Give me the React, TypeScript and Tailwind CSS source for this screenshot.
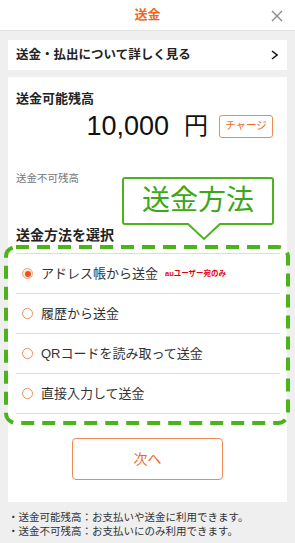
import React from 'react';

const items = [
    { label: 'アドレス帳から送金', selected: true, note: 'auユーザー宛のみ' },
    { label: '履歴から送金', selected: false },
    { label: 'QRコードを読み取って送金', selected: false },
    { label: '直接入力して送金', selected: false },
];

function Radio({ selected }: { selected: boolean }) {
    if (selected) {
        return (
            <span className="flex h-[11px] w-[11px] items-center justify-center rounded-full border border-[#f4a27a] bg-[#fde6da]">
                <span className="h-[6px] w-[6px] rounded-full bg-[#e8531a]" />
            </span>
        );
    }
    return <span className="h-[11px] w-[11px] rounded-full border-[1.5px] border-[#f08a55] bg-white" />;
}

export default function App() {
    return (
        <div
            className="relative h-[543px] w-[295px] overflow-hidden bg-[#efefef] text-[#222]"
            style={{ fontFamily: '"Liberation Sans", "Noto Sans CJK JP", sans-serif' }}
        >
            {/* ヘッダー */}
            <div className="relative flex h-[31px] items-center justify-center border-b border-[#e3e3e3] bg-white">
                <span className="text-[13px] font-bold text-[#ec6a1f]">送金</span>
                <svg className="absolute right-[12px] top-[10px]" width="12" height="12" viewBox="0 0 12 12">
                    <path d="M1 1L11 11M11 1L1 11" stroke="#8a8a8a" strokeWidth="1.4" fill="none" />
                </svg>
            </div>

            {/* 詳しく見る */}
            <div className="mx-[8px] mt-[9px] flex h-[30px] items-center justify-between bg-white pl-[8px] pr-[9px]">
                <span className="text-[12.5px] font-bold">送金・払出について詳しく見る</span>
                <svg width="7" height="10" viewBox="0 0 7 10">
                    <path d="M1 1L6 5L1 9" stroke="#111" strokeWidth="1.5" fill="none" />
                </svg>
            </div>

            {/* メインカード */}
            <div className="relative mx-[8px] mt-[7px] bg-white pb-[22px] pt-[13px]">
                <p className="pl-[8px] text-[13px] font-bold leading-[18px]">送金可能残高</p>
                <div className="mt-[2px] flex h-[32px] items-center justify-end pr-[14px]">
                    <span className="text-[27px] leading-[32px] text-[#111]">10,000</span>
                    <span className="ml-[15px] text-[24px] leading-[32px] text-[#111]">円</span>
                    <span className="ml-[11px] flex h-[23px] w-[54px] items-center justify-center rounded-[3px] border border-[#f08a55] text-[10.5px] text-[#ec6a1f]">
                        チャージ
                    </span>
                </div>
                <p className="mt-[28px] pl-[8px] text-[10.5px] leading-[16px] text-[#777]">送金不可残高</p>
                <p className="mt-[39px] pl-[8px] text-[14px] font-bold leading-[20px]">送金方法を選択</p>

                <ul className="mx-[8px] mr-[7px] mt-[8px] border-t border-[#dcdcdc]">
                    {items.map((item) => (
                        <li key={item.label} className="flex h-[40px] items-center border-b border-[#dcdcdc] pl-[6px]">
                            <Radio selected={item.selected} />
                            <span className="ml-[8px] text-[13px] text-[#333]">{item.label}</span>
                            {item.note && (
                                <span className="ml-[7px] text-[7.5px] font-bold text-[#e60012]">{item.note}</span>
                            )}
                        </li>
                    ))}
                </ul>

                <div className="mx-auto mt-[24px] flex h-[42px] w-[151px] items-center justify-center rounded-[4px] border border-[#f08a55] text-[14px] text-[#ec6a1f]">
                    次へ
                </div>

                {/* 吹き出し */}
                <div className="absolute left-[114px] top-[100px] h-[48px] w-[152px]">
                    <div className="flex h-full w-full items-center justify-center rounded-[3px] border-2 border-[#4cb31a] bg-white text-[28px] leading-none text-[#3aa81a]">
                        送金方法
                    </div>
                    <svg className="absolute left-[64px] top-[46px]" width="36" height="18" viewBox="0 0 36 18">
                        <path d="M1 0L18 16L35 0" fill="white" stroke="#4cb31a" strokeWidth="2" />
                    </svg>
                </div>
            </div>

            {/* 注記 */}
            <div className="mt-[8px] pl-[8px] text-[10.5px] leading-[14px] text-[#333]">
                <p>・送金可能残高：お支払いや送金に利用できます。</p>
                <p>・送金不可残高：お支払いにのみ利用できます。</p>
            </div>

            {/* 破線枠 */}
            <svg className="pointer-events-none absolute left-[4px] top-[245px]" width="287" height="181" viewBox="0 0 287 181">
                <rect x="2" y="2" width="282" height="176" rx="10" fill="none" stroke="#4cb31a" strokeWidth="4" strokeDasharray="13 8" />
            </svg>
        </div>
    );
}
